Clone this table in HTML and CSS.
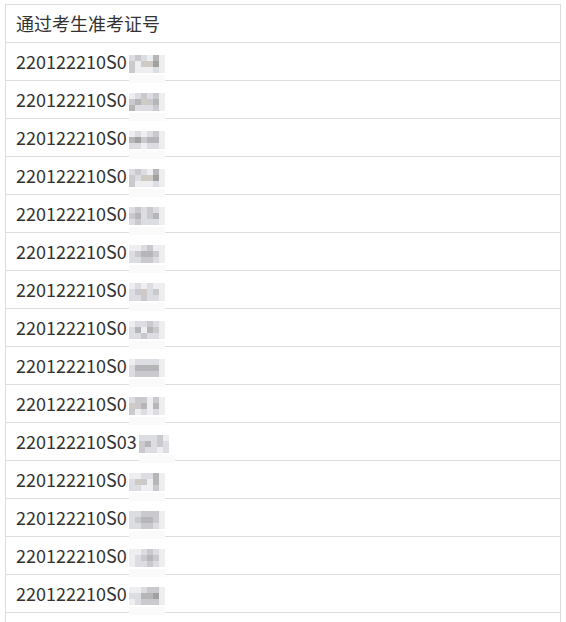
FILE: index.html
```html
<!DOCTYPE html>
<html>
  <head>
    <meta charset="utf-8">
    <title>通过考生准考证号</title>
    <link rel="stylesheet" href="styles.css">
  </head>
  <body>
    <table class="list">
      <thead>
        <tr><th>通过考生准考证号</th></tr>
      </thead>
      <tbody>
        <tr><td>220122210S0<span class="blur"><i class="g2"></i><i class="g3"></i><i class="g2"></i><i class="g1"></i><i class="g4"></i><i class="g1"></i><i class="g3"></i><i class="g1"></i><i class="g6"></i><i class="g6"></i><i class="g5"></i><i class="g1"></i><i class="g3"></i><i class="g1"></i><i class="g1"></i><i class="g1"></i><i class="g2"></i><i class="g1"></i></span></td></tr>
        <tr><td>220122210S0<span class="blur"><i class="g1"></i><i class="g2"></i><i class="g3"></i><i class="g2"></i><i class="g3"></i><i class="g1"></i><i class="g3"></i><i class="g4"></i><i class="g6"></i><i class="g3"></i><i class="g4"></i><i class="g1"></i><i class="g4"></i><i class="g2"></i><i class="g2"></i><i class="g2"></i><i class="g3"></i><i class="g1"></i></span></td></tr>
        <tr><td>220122210S0<span class="blur"><i class="g1"></i><i class="g2"></i><i class="g1"></i><i class="g2"></i><i class="g3"></i><i class="g1"></i><i class="g4"></i><i class="g5"></i><i class="g3"></i><i class="g4"></i><i class="g4"></i><i class="g1"></i><i class="g2"></i><i class="g2"></i><i class="g1"></i><i class="g2"></i><i class="g2"></i><i class="g1"></i></span></td></tr>
        <tr><td>220122210S0<span class="blur"><i class="g2"></i><i class="g3"></i><i class="g2"></i><i class="g1"></i><i class="g4"></i><i class="g1"></i><i class="g3"></i><i class="g2"></i><i class="g6"></i><i class="g6"></i><i class="g5"></i><i class="g1"></i><i class="g3"></i><i class="g1"></i><i class="g1"></i><i class="g1"></i><i class="g2"></i><i class="g1"></i></span></td></tr>
        <tr><td>220122210S0<span class="blur"><i class="g2"></i><i class="g3"></i><i class="g2"></i><i class="g3"></i><i class="g2"></i><i class="g1"></i><i class="g3"></i><i class="g4"></i><i class="g2"></i><i class="g3"></i><i class="g4"></i><i class="g1"></i><i class="g2"></i><i class="g3"></i><i class="g2"></i><i class="g2"></i><i class="g2"></i><i class="g1"></i></span></td></tr>
        <tr><td>220122210S0<span class="blur"><i class="g1"></i><i class="g1"></i><i class="g2"></i><i class="g3"></i><i class="g1"></i><i class="g1"></i><i class="g2"></i><i class="g3"></i><i class="g4"></i><i class="g4"></i><i class="g3"></i><i class="g1"></i><i class="g2"></i><i class="g2"></i><i class="g3"></i><i class="g3"></i><i class="g2"></i><i class="g1"></i></span></td></tr>
        <tr><td>220122210S0<span class="blur"><i class="g1"></i><i class="g2"></i><i class="g1"></i><i class="g2"></i><i class="g1"></i><i class="g1"></i><i class="g2"></i><i class="g3"></i><i class="g6"></i><i class="g2"></i><i class="g3"></i><i class="g1"></i><i class="g2"></i><i class="g2"></i><i class="g3"></i><i class="g2"></i><i class="g2"></i><i class="g1"></i></span></td></tr>
        <tr><td>220122210S0<span class="blur"><i class="g1"></i><i class="g2"></i><i class="g2"></i><i class="g3"></i><i class="g2"></i><i class="g1"></i><i class="g2"></i><i class="g4"></i><i class="g1"></i><i class="g4"></i><i class="g3"></i><i class="g1"></i><i class="g2"></i><i class="g2"></i><i class="g3"></i><i class="g2"></i><i class="g2"></i><i class="g1"></i></span></td></tr>
        <tr><td>220122210S0<span class="blur"><i class="g1"></i><i class="g2"></i><i class="g2"></i><i class="g2"></i><i class="g2"></i><i class="g1"></i><i class="g2"></i><i class="g4"></i><i class="g4"></i><i class="g4"></i><i class="g4"></i><i class="g1"></i><i class="g2"></i><i class="g3"></i><i class="g3"></i><i class="g3"></i><i class="g3"></i><i class="g1"></i></span></td></tr>
        <tr><td>220122210S0<span class="blur"><i class="g2"></i><i class="g3"></i><i class="g3"></i><i class="g1"></i><i class="g3"></i><i class="g1"></i><i class="g6"></i><i class="g3"></i><i class="g4"></i><i class="g1"></i><i class="g4"></i><i class="g1"></i><i class="g3"></i><i class="g1"></i><i class="g2"></i><i class="g1"></i><i class="g2"></i><i class="g1"></i></span></td></tr>
        <tr><td>220122210S03<span class="blur narrow"><i class="g2"></i><i class="g2"></i><i class="g2"></i><i class="g3"></i><i class="g1"></i><i class="g3"></i><i class="g4"></i><i class="g2"></i><i class="g3"></i><i class="g2"></i><i class="g3"></i><i class="g2"></i><i class="g2"></i><i class="g1"></i><i class="g2"></i></span></td></tr>
        <tr><td>220122210S0<span class="blur"><i class="g1"></i><i class="g1"></i><i class="g2"></i><i class="g2"></i><i class="g4"></i><i class="g1"></i><i class="g2"></i><i class="g6"></i><i class="g3"></i><i class="g1"></i><i class="g4"></i><i class="g1"></i><i class="g2"></i><i class="g2"></i><i class="g1"></i><i class="g1"></i><i class="g3"></i><i class="g1"></i></span></td></tr>
        <tr><td>220122210S0<span class="blur"><i class="g2"></i><i class="g2"></i><i class="g3"></i><i class="g3"></i><i class="g3"></i><i class="g1"></i><i class="g2"></i><i class="g3"></i><i class="g4"></i><i class="g4"></i><i class="g3"></i><i class="g1"></i><i class="g2"></i><i class="g2"></i><i class="g3"></i><i class="g3"></i><i class="g2"></i><i class="g1"></i></span></td></tr>
        <tr><td>220122210S0<span class="blur"><i class="g1"></i><i class="g1"></i><i class="g2"></i><i class="g3"></i><i class="g2"></i><i class="g1"></i><i class="g1"></i><i class="g2"></i><i class="g3"></i><i class="g4"></i><i class="g3"></i><i class="g1"></i><i class="g1"></i><i class="g2"></i><i class="g2"></i><i class="g3"></i><i class="g2"></i><i class="g1"></i></span></td></tr>
        <tr><td>220122210S0<span class="blur"><i class="g1"></i><i class="g1"></i><i class="g2"></i><i class="g3"></i><i class="g3"></i><i class="g1"></i><i class="g2"></i><i class="g2"></i><i class="g4"></i><i class="g4"></i><i class="g5"></i><i class="g1"></i><i class="g1"></i><i class="g2"></i><i class="g3"></i><i class="g3"></i><i class="g3"></i><i class="g1"></i></span></td></tr>
        <tr><td class="empty"></td></tr>
      </tbody>
    </table>
  </body>
</html>
```

FILE: styles.css
```css
html {
  background-color: #fff;
}

body {
  margin: 4px 5px;
  font-family: "Noto Sans CJK SC", "Noto Sans", sans-serif;
  color: #333;
}

.list {
  width: 100%;
  border-collapse: collapse;
  border: 1px solid #ddd;
}

.list th,
.list td {
  height: 37px;
  padding: 0 10px;
  border-top: 1px solid #ddd;
  font-size: 18px;
  font-weight: normal;
  text-align: left;
  line-height: 37px;
  white-space: nowrap;
}

.blur {
  position: relative;
  display: inline-grid;
  grid-template-columns: repeat(6, 6px);
  grid-auto-rows: 6px;
  margin-left: 2px;
  vertical-align: middle;
}

.blur.narrow {
  grid-template-columns: repeat(5, 6px);
}

.blur:after {
  content: "";
  position: absolute;
  left: 0;
  top: 20px;
  width: 36px;
  height: 8px;
  background-color: #fafafa;
}

.blur i {
  display: block;
}

.g1 { background-color: #eeeef1; }
.g2 { background-color: #dcdde3; }
.g3 { background-color: #cacace; }
.g4 { background-color: #b6b6b9; }
.g5 { background-color: #a0a1a3; }
.g6 { background-color: #cfcac3; }
```
